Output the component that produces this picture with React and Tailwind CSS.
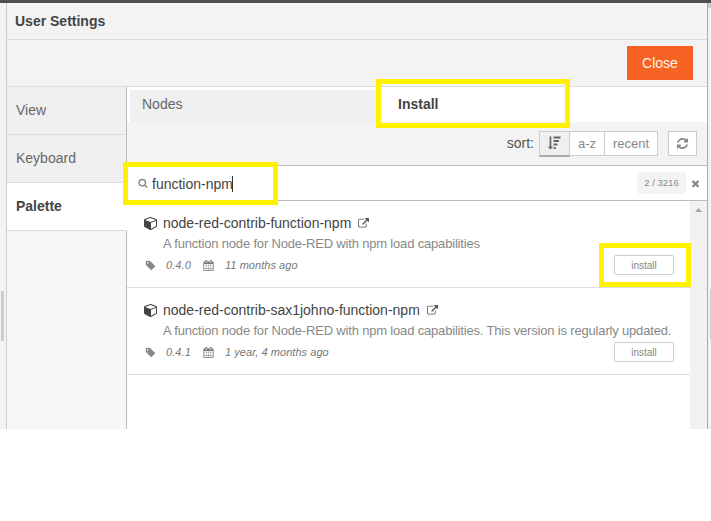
const ICONS = {
  search:
    'M1216 832q0-185-131.5-316.5t-316.5-131.5-316.5 131.5-131.5 316.5 131.5 316.5 316.5 131.5 316.5-131.5 131.5-316.5zm512 832q0 52-38 90t-90 38q-54 0-90-38l-343-342q-179 124-399 124-143 0-273.5-55.5t-225-150-150-225-55.5-273.5 55.5-273.5 150-225 225-150 273.5-55.5 273.5 55.5 225 150 150 225 55.5 273.5q0 220-124 399l343 343q37 37 37 90z',
  refresh:
    'M1639 1056q0 5-1 7-64 268-268 434.5t-478 166.5q-146 0-282.5-55t-243.5-157l-129 129q-19 19-45 19t-45-19-19-45v-448q0-26 19-45t45-19h448q26 0 45 19t19 45-19 45l-137 137q71 66 161 102t187 36q134 0 250-65t186-179q11-17 53-117 8-23 30-23h192q13 0 22.5 9.5t9.5 22.5zm25-800v448q0 26-19 45t-45 19h-448q-26 0-45-19t-19-45 19-45l138-138q-148-137-349-137-134 0-250 65t-186 179q-11 17-53 117-8 23-30 23h-199q-13 0-22.5-9.5t-9.5-22.5v-7q65-268 270-434.5t480-166.5q146 0 284 55.5t245 156.5l130-129q19-19 45-19t45 19 19 45z',
  times:
    'M1490 1322q0 40-28 68l-136 136q-28 28-68 28t-68-28l-294-294-294 294q-28 28-68 28t-68-28l-136-136q-28-28-28-68t28-68l294-294-294-294q-28-28-28-68t28-68l136-136q28-28 68-28t68 28l294 294 294-294q28-28 68-28t68 28l136 136q28 28 28 68t-28 68l-294 294 294 294q28 28 28 68z',
  external:
    'M1408 928v320q0 119-84.5 203.5t-203.5 84.5h-832q-119 0-203.5-84.5t-84.5-203.5v-832q0-119 84.5-203.5t203.5-84.5h704q14 0 23 9t9 23v64q0 14-9 23t-23 9h-704q-66 0-113 47t-47 113v832q0 66 47 113t113 47h832q66 0 113-47t47-113v-320q0-14 9-23t23-9h64q14 0 23 9t9 23zm384-864v512q0 26-19 45t-45 19-45-19l-176-176-652 652q-10 10-23 10t-23-10l-114-114q-10-10-10-23t10-23l652-652-176-176q-19-19-19-45t19-45 45-19h512q26 0 45 19t19 45z',
  tag: 'M576 448q0-53-37.5-90.5t-90.5-37.5-90.5 37.5-37.5 90.5 37.5 90.5 90.5 37.5 90.5-37.5 37.5-90.5zm1067 576q0 53-37 90l-491 492q-39 37-91 37-53 0-90-37l-715-716q-38-37-64.5-101t-26.5-117v-416q0-52 38-90t90-38h416q53 0 117 26.5t102 64.5l715 714q37 39 37 91z',
  cube: 'M896 1629l640-349v-636l-640 233v752zm-64-865l698-254-698-254-698 254zm832-252v768q0 35-18 65t-49 47l-704 384q-28 16-61 16t-61-16l-704-384q-31-17-49-47t-18-65v-768q0-40 23-73t61-47l704-256q22-8 44-8t44 8l704 256q38 14 61 47t23 73z',
  calendar:
    'M192 1664h288v-288h-288v288zm352 0h320v-288h-320v288zm-352-352h288v-320h-288v320zm352 0h320v-320h-320v320zm-352-384h288v-288h-288v288zm736 736h320v-288h-320v288zm-384-736h320v-288h-320v288zm768 736h288v-288h-288v288zm-384-352h320v-320h-320v320zm-352-864v-288q0-13-9.5-22.5t-22.5-9.5h-64q-13 0-22.5 9.5t-9.5 22.5v288q0 13 9.5 22.5t22.5 9.5h64q13 0 22.5-9.5t9.5-22.5zm736 864h288v-320h-288v320zm-384-384h320v-288h-320v288zm384 0h288v-288h-288v288zm32-480v-288q0-13-9.5-22.5t-22.5-9.5h-64q-13 0-22.5 9.5t-9.5 22.5v288q0 13 9.5 22.5t22.5 9.5h64q13 0 22.5-9.5t9.5-22.5zm384-64v1280q0 52-38 90t-90 38h-1408q-52 0-90-38t-38-90v-1280q0-52 38-90t90-38h128v-96q0-66 47-113t113-47h64q66 0 113 47t47 113v96h384v-96q0-66 47-113t113-47h64q66 0 113 47t47 113v96h128q52 0 90 38t38 90z',
};

function Icon({ name, className }) {
  return (
    <svg viewBox="0 0 1792 1792" fill="currentColor" className={`shrink-0 ${className}`}>
      <path d={ICONS[name]} />
    </svg>
  );
}

function SortIcon() {
  return (
    <svg viewBox="0 0 14 14" fill="currentColor" className="mr-0.5 size-3.5">
      <path d="M2.6 0.5h1.7v10h1.9L3.45 13.5 0.7 10.5h1.9zM6.5 0.5h7v1.9h-7zM6.5 4h5.5v1.9H6.5zM6.5 7.6h4v1.9h-4zM6.5 11.2h2.4v1.9H6.5z" />
    </svg>
  );
}

const PACKAGES = [
  {
    name: 'node-red-contrib-function-npm',
    description: 'A function node for Node-RED with npm load capabilities',
    version: '0.4.0',
    updated: '11 months ago',
  },
  {
    name: 'node-red-contrib-sax1johno-function-npm',
    description: 'A function node for Node-RED with npm load capabilities. This version is regularly updated.',
    version: '0.4.1',
    updated: '1 year, 4 months ago',
  },
];

function PackageRow({ item, highlighted }) {
  return (
    <div className="h-[87px] border-b border-[#ddd] pl-4 pr-4 pt-3">
      <div className="flex h-5 items-center text-[14px] text-[#444]">
        <Icon name="cube" className="ml-px mr-[5px] size-3.5" />
        <span className="whitespace-nowrap">{item.name}</span>
        <Icon name="external" className="ml-[7px] mt-px size-[11px] text-[#555]" />
      </div>
      <div className="h-[21px] whitespace-nowrap pl-5 text-[13px] leading-[21px] tracking-[-0.178px] text-[#888]">
        {item.description}
      </div>
      <div className="flex h-[22px] items-center text-[11px] text-[#777]">
        <Icon name="tag" className="ml-0.5 size-[11px] text-[#888]" />
        <span className="ml-2.5 w-[37px] italic tracking-[0.1px]">{item.version}</span>
        <Icon name="calendar" className="size-[11px] text-[#777]" />
        <span className="ml-[11px] grow italic tracking-[0.05px]">{item.updated}</span>
        <div className="relative flex">
          <button className="h-5 w-[60px] rounded-[2px] border border-[#ccc] bg-white text-[10px] text-[#888]">
            install
          </button>
          {highlighted && (
            <div className="absolute -left-[15px] -top-3 h-11 w-[92px] border-5 border-[#fff200]" />
          )}
        </div>
      </div>
    </div>
  );
}

export default function App() {
  return (
    <div className="h-[521px] w-[711px] overflow-hidden bg-white font-['Liberation_Sans',Arial,sans-serif] text-[14px] text-[#444]">
      <div className="h-[3px] bg-[#4f4f4f]" />
      <div className="flex h-[426px]">
        <div className="w-1.5 shrink-0 bg-[#f3f3f3] pl-px pt-72">
          <div className="h-[50px] w-[3px] bg-[#ccc]" />
        </div>
        <div className="flex w-[702px] shrink-0 flex-col border-l border-r border-l-[#ccc] border-r-[#aaa] bg-[#f3f3f3]">
          <div className="flex h-[37px] shrink-0 items-center border-b border-[#ddd] pl-2 font-bold">User Settings</div>
          <div className="flex h-[47px] shrink-0 items-start justify-end border-b border-[#ddd] pr-3.5 pt-1.5">
            <button className="h-[34px] w-[66px] bg-[#f66325] text-[14px] text-[#fff2ec]">Close</button>
          </div>
          <div className="flex grow">
            <nav className="w-[120px] shrink-0 border-r border-[#bbb] bg-[#f7f7f7] text-[#666]">
              <div className="flex h-12 items-center border-b border-[#ddd] bg-[#f0f0f0] pl-[9px]">View</div>
              <div className="flex h-12 items-center border-b border-[#ddd] bg-[#f0f0f0] pl-[9px]">Keyboard</div>
              <div className="-mr-px flex h-12 items-center border-b border-[#ddd] bg-white pl-[9px] font-bold text-[#444]">
                Palette
              </div>
            </nav>
            <main className="flex w-[580px] flex-col bg-white">
              <div className="flex h-[35px] shrink-0 items-end pl-[3px]">
                <div className="h-8 w-[246px] bg-[#f0f0f0] pl-3 pt-1.5 leading-4 text-[#666]">Nodes</div>
                <div className="relative h-8 w-[194px] pl-[22px] pt-1.5 font-bold leading-4">
                  Install
                  <div className="absolute -top-[11px] left-0 h-[49px] w-[194px] border-5 border-[#fff200]" />
                </div>
              </div>
              <div className="flex h-11 shrink-0 items-center justify-end border-b border-[#bbb] bg-[#f3f3f3] pr-2.5 text-[#888]">
                <span className="mr-[5px] text-[#555]">sort:</span>
                <button className="flex h-[26px] w-[31px] items-center justify-center border border-b-2 border-[#ccc] border-b-[#aaa] bg-[#efefef] text-[#666]">
                  <SortIcon />
                </button>
                <button className="h-[25px] w-[34px] border-y border-[#ccc] bg-white text-[13px]">a-z</button>
                <button className="h-[25px] w-[54px] border border-[#ccc] bg-white text-[13px]">recent</button>
                <button className="ml-2.5 flex h-[25px] w-[29px] items-center justify-center border border-[#ccc] bg-white">
                  <Icon name="refresh" className="size-[13px]" />
                </button>
              </div>
              <div className="relative flex h-[35px] shrink-0 items-center border-b border-[#bbb] pl-[11px] pr-1.5">
                <Icon name="search" className="size-[10px] text-[#888]" />
                <span className="ml-1 mt-0.5 w-[81px] whitespace-nowrap border-r border-[#333] leading-4">function-npm</span>
                <span className="ml-auto flex h-[22px] w-[49px] items-center justify-center rounded bg-[#f3f3f3] text-[9.5px] text-[#888]">
                  2 / 3216
                </span>
                <Icon name="times" className="ml-1 size-[11px] text-[#888]" />
                <div className="absolute -left-1 -top-1 z-10 h-[43px] w-[155px] border-5 border-[#fff200]" />
              </div>
              <div className="flex grow">
                <div className="w-[563px]">
                  {PACKAGES.map((item, i) => (
                    <PackageRow key={item.name} item={item} highlighted={i === 0} />
                  ))}
                </div>
                <div className="flex w-[17px] justify-center bg-[#f1f1f1] pt-[7px]">
                  <svg viewBox="0 0 7 4" className="h-1 w-[7px]" fill="#a3a3a3">
                    <path d="M0 4 3.5 0 7 4z" />
                  </svg>
                </div>
              </div>
            </main>
          </div>
        </div>
        <div className="flex w-[3px] shrink-0 flex-col items-end bg-[#f3f3f3]">
          <div className="h-[5px] w-[3px] bg-[#ccc]" />
          <div className="mt-[281px] h-[50px] w-px bg-[#ccc]" />
        </div>
      </div>
    </div>
  );
}
